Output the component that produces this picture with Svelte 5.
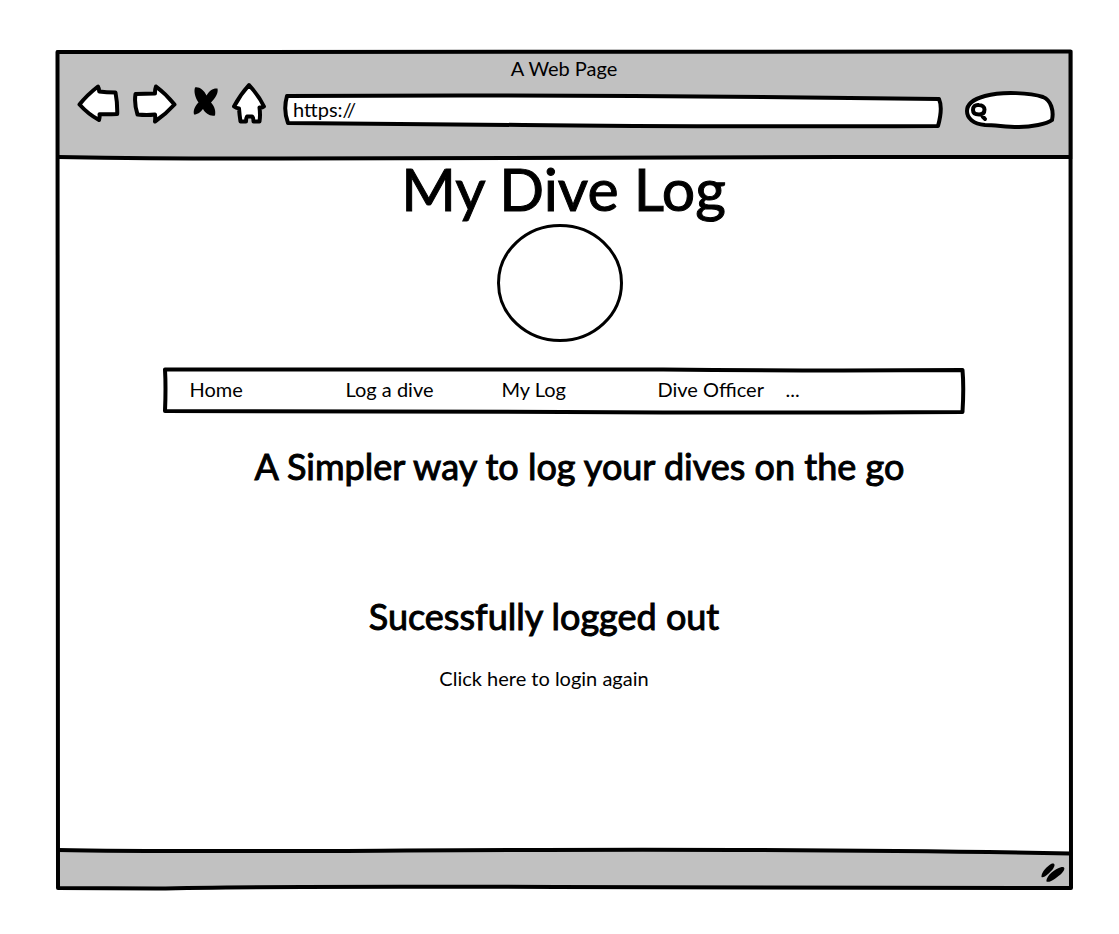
<script>
  const links = ['Home', 'Log a dive', 'My Log', 'Dive Officer', '...'];
  let address = $state('https://');
  let query = $state('');
</script>

<div class="page">
  <div class="browser">
    <header class="toolbar">
      <svg class="sketch" viewBox="0 0 1017 109" preserveAspectRatio="none" aria-hidden="true">
        <path class="line" d="M2 107 C60 108 130 109 224 108.500 C420 107 740 107 1014 107" />
      </svg>
      <p class="caption">A Web Page</p>
      <div class="controls">
        <div class="buttons">
          <button type="button" aria-label="Back">
            <svg width="43" height="42" viewBox="77 83 43 42">
              <path class="icon" d="M79.500 104.500 Q87 95 98 86.500 Q99 88 99.200 91.500 Q106 92.500 115.500 92.500 Q117.500 103 117.200 114 Q108 114.500 99.500 114.200 Q100 117 99 120 Q88 114 79.500 104.500 Z" />
            </svg>
          </button>
          <button type="button" aria-label="Forward">
            <svg width="45" height="42" viewBox="132 83 45 42">
              <path class="icon" d="M135.500 94 Q145 93.500 155 93.500 Q154.800 90 156 86.500 Q166 94 174.500 104.500 Q166 114 155 121.500 Q155.500 118 155 114.500 Q147 115.500 137.500 114.500 Q134 104 135.500 94 Z" />
            </svg>
          </button>
          <button type="button" aria-label="Stop">
            <svg width="26" height="42" viewBox="194 83 26 42">
              <path d="M196 87.500 C200 86.500 205 90 207.500 95.500 C210.500 90.500 214 88 218.500 88.500 C219.500 93 216.500 98 212 102.500 C215.500 106 217 111 216 115.500 C211 116.500 206.500 113.500 204 109 C201.500 112 199 114.500 195 114.500 C194 110 196 106 199.500 102.500 C196.500 98 194.500 92 196 87.500 Z" />
            </svg>
          </button>
          <button type="button" aria-label="Home page">
            <svg width="36" height="44" viewBox="231 82 36 44">
              <path class="icon" d="M249 85 Q259 96 264 106.500 Q262 108 259.500 107.500 Q260.500 115 259.500 121.500 L253.500 121.500 Q253.500 117.500 252 116.500 L247 116.500 Q246 118 246 121.500 L240.500 121.500 Q239.500 115 239 108.500 Q236 108 234 106.500 Q240 95 249 85 Z" />
            </svg>
          </button>
        </div>
        <label class="field address">
          <svg class="sketch" viewBox="0 0 660 34" preserveAspectRatio="none" aria-hidden="true">
            <path class="icon" d="M4 2 Q300 0 656 5 Q660 14 655 32 Q400 33 240 31 Q120 30 5 29 Q0 16 4 2 Z" />
          </svg>
          <input type="text" aria-label="Address" bind:value={address} />
        </label>
        <label class="field search">
          <svg class="sketch" viewBox="0 0 90 38" preserveAspectRatio="none" aria-hidden="true">
            <path class="icon" d="M20 5 C38 0 66 2 78 6 C86 9 89 20 87 29 C82 33 66 36 54 36 C42 36 30 34 20 34 C8 33 2 27 2 20 C2 13 9 8 20 5 Z" />
          </svg>
          <svg class="glass" width="18" height="20" viewBox="0 0 18 20" aria-hidden="true">
            <path d="M8 3 C4 2.500 2 4.500 2 8 C2 11 4.500 12.500 8 12.500 C11.500 12.500 13.500 11 13.500 7.500 C13.500 5 11 3 8 3 Z M10.500 12 Q11.500 15 14 17" />
          </svg>
          <input type="text" aria-label="Search" bind:value={query} />
        </label>
      </div>
    </header>

    <main>
      <h1>My Dive Log</h1>
      <svg class="logo" width="126" height="118" viewBox="0 0 126 118" aria-hidden="true">
        <ellipse cx="63" cy="59" rx="61.500" ry="57.500" />
      </svg>
      <nav>
        <svg class="sketch" viewBox="0 0 802 47" preserveAspectRatio="none" aria-hidden="true">
          <path class="line" d="M2 2.500 Q300 2 500 2.500 Q650 4 799.500 3 Q801 20 799.500 45 Q600 46 400 45 Q200 45 2 44 Q3 20 2 2.500 Z" />
        </svg>
        <ul>
          {#each links as link}
            <li><a href="#top">{link}</a></li>
          {/each}
        </ul>
      </nav>
      <h2 class="tagline">A Simpler way to log your dives on the go</h2>
      <section>
        <h2>Sucessfully logged out</h2>
        <a href="#login">Click here to login again</a>
      </section>
    </main>

    <footer>
      <svg class="sketch" viewBox="0 0 1017 41" preserveAspectRatio="none" aria-hidden="true">
        <path class="fill" d="M2 1 Q700 -2 1014 5 L1014 39 L2 39 Z" />
        <path class="line" d="M2 1 C100 3 250 2 350 1.500 Q750 -1 1014 4.500" />
      </svg>
      <svg class="grip" width="24" height="20" viewBox="0 0 24 20" aria-hidden="true">
        <path d="M0.500 14 C0 9.500 6 3 11 0.500 C14.500 0 14 3 12 6 C9 9.500 3 15.500 0.500 14 Z M5.500 18.500 C4.500 14 13 6 20.500 4 C25 3.500 23.500 7.500 21 10 C17 14 8.500 20.500 5.500 18.500 Z" />
      </svg>
    </footer>

    <svg class="sketch outline" viewBox="0 0 1017 840" preserveAspectRatio="none" aria-hidden="true">
      <path class="line" d="M1.500 2 Q500 1 1014.500 1.500 Q1014 400 1015 838 Q700 837 500 837 Q200 836 100 838.500 L2 838 Q3 400 1.500 2 Z" />
    </svg>
  </div>
</div>

<style>
  :global(body) {
    margin: 0;
    background: #fff;
  }

  .page {
    box-sizing: border-box;
    min-height: 100vh;
    display: flex;
    padding: 50px 46px 44px 56px;
    color: #000;
    font: 20px/24px Lato, 'Open Sans', sans-serif;
  }

  .browser {
    position: relative;
    flex: 1;
    min-width: 0;
    display: flex;
    flex-direction: column;
  }

  .sketch {
    position: absolute;
    inset: 0;
    width: 100%;
    height: 100%;
    overflow: visible;
    pointer-events: none;
  }

  .line,
  .icon {
    fill: none;
    stroke: #000;
    stroke-width: 4;
    stroke-linejoin: round;
    stroke-linecap: round;
    vector-effect: non-scaling-stroke;
  }

  .icon {
    fill: #fff;
  }

  .toolbar {
    position: relative;
    box-sizing: border-box;
    height: 109px;
    padding: 6px 18px 0 21px;
    background: #c1c1c1;
  }

  .caption {
    margin: 0;
    padding-right: 4px;
    text-align: center;
  }

  .controls {
    display: flex;
    align-items: center;
    gap: 16px;
    height: 44px;
    margin-top: 2px;
  }

  .buttons {
    display: flex;
    align-items: center;
    gap: 12px;
  }

  button {
    display: flex;
    padding: 0;
    border: 0;
    background: none;
    cursor: pointer;
  }

  button:nth-child(3) {
    margin: 0 0 0 4px;
  }

  .field {
    position: relative;
    display: flex;
  }

  .address {
    flex: 1;
    height: 34px;
    margin-top: 13px;
  }

  .search {
    width: 90px;
    height: 38px;
    margin: 12px 0 0 6px;
  }

  .glass {
    position: absolute;
    left: 6px;
    top: 11px;
    fill: none;
    stroke: #000;
    stroke-width: 4;
    stroke-linecap: round;
  }

  input {
    position: relative;
    box-sizing: border-box;
    width: 100%;
    min-width: 0;
    padding: 0 10px 4px;
    border: 0;
    outline: 0;
    background: none;
    color: inherit;
    font: inherit;
  }

  .search input {
    padding-left: 26px;
  }

  main {
    flex: 1;
    display: flex;
    flex-direction: column;
    align-items: center;
    padding-right: 2px;
    text-align: center;
  }

  h1,
  h2 {
    margin: 0;
    font-weight: 400;
    -webkit-text-stroke: 1px #000;
  }

  h1 {
    font-size: 59px;
    line-height: 60px;
  }

  h2 {
    font-size: 36px;
    line-height: 44px;
  }

  .logo {
    margin: 5px 8px 25px 0;
    fill: #fff;
    stroke: #000;
    stroke-width: 3;
  }

  nav {
    position: relative;
    width: 100%;
    max-width: 802px;
  }

  ul {
    position: relative;
    display: grid;
    grid-template-columns: repeat(3, 156px) 128px 1fr;
    margin: 0;
    padding: 10px 0 13px 27px;
    list-style: none;
    text-align: left;
  }

  a {
    color: inherit;
    text-decoration: none;
  }

  .tagline {
    margin-top: 30px;
    padding-left: 32px;
  }

  section {
    display: flex;
    flex-direction: column;
    align-items: center;
    gap: 28px;
    padding: 106px 39px 40px 0;
  }

  footer {
    position: relative;
    display: flex;
    justify-content: flex-end;
    box-sizing: border-box;
    height: 41px;
    padding: 14px 8px 0 0;
  }

  .fill {
    fill: #c1c1c1;
  }

  .grip {
    position: relative;
  }
</style>
